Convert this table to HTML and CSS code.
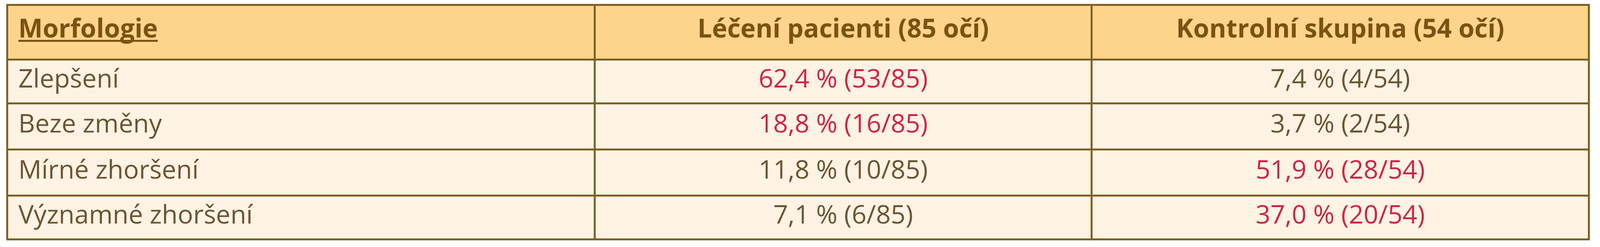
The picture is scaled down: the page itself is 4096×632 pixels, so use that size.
FILE: index.html
```html
<!DOCTYPE html>
<html lang="cs">
<head>
<meta charset="utf-8">
<title>Morfologie</title>
<link rel="stylesheet" href="styles.css">
</head>
<body>
<div class="tbl">
  <div class="cell head first"><span class="ul">Morfologie</span></div>
  <div class="cell head mid">Léčení pacienti (85 očí)</div>
  <div class="cell head mid">Kontrolní skupina (54 očí)</div>

  <div class="cell r1 first">Zlepšení</div>
  <div class="cell r1 mid red">62,4 % (53/85)</div>
  <div class="cell r1 mid">7,4 % (4/54)</div>

  <div class="cell r2 first">Beze změny</div>
  <div class="cell r2 mid red">18,8 % (16/85)</div>
  <div class="cell r2 mid">3,7 % (2/54)</div>

  <div class="cell r3 first">Mírné zhoršení</div>
  <div class="cell r3 mid">11,8 % (10/85)</div>
  <div class="cell r3 mid red">51,9 % (28/54)</div>

  <div class="cell r4 first">Významné zhoršení</div>
  <div class="cell r4 mid">7,1 % (6/85)</div>
  <div class="cell r4 mid red">37,0 % (20/54)</div>
</div>
</body>
</html>
```
FILE: styles.css
```css
html, body {
  margin: 0;
  padding: 0;
  background: #ffffff;
}

body {
  font-family: "Open Sans", "Noto Sans", sans-serif;
  color: #6b5534;
}

.tbl {
  box-sizing: border-box;
  margin: 10px 0 0 16px;
  width: 4054px;
  border: 5px solid #7f6025;
  display: grid;
  grid-template-columns: 1499px 1272px 1273px;
  grid-template-rows: 135px 112px 118px 118px 112px;
  background: #fff3e3;
}

.cell {
  box-sizing: border-box;
  display: flex;
  align-items: center;
  font-size: 66px;
  line-height: 1;
  white-space: nowrap;
  padding-bottom: 21px;
}

.first {
  padding-left: 26px;
  justify-content: flex-start;
}

.mid {
  justify-content: center;
  border-left: 5px solid #7f6025;
}

.head {
  background: #fdd48b;
  color: #7a5312;
  font-weight: 700;
  font-size: 66px;
  padding-bottom: 25px;
}

.r1, .r2, .r3, .r4 {
  border-top: 5px solid #7f6025;
}

.ul {
  text-decoration: underline;
  text-decoration-thickness: 5px;
  text-underline-offset: 6px;
  text-decoration-skip-ink: none;
}

.red {
  color: #cf2449;
}
```
